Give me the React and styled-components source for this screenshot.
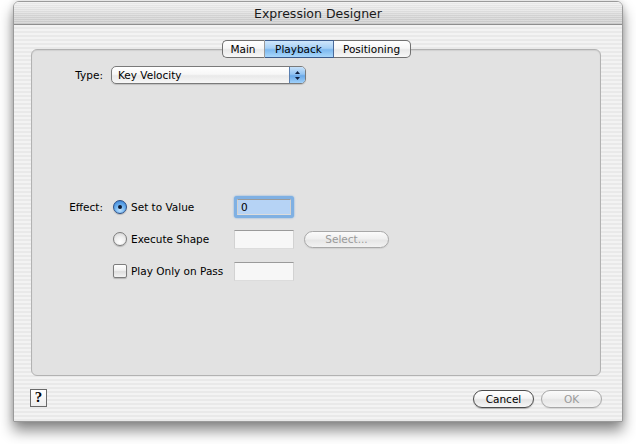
import React from 'react'
import styled, { createGlobalStyle } from 'styled-components'

const GlobalStyle = createGlobalStyle`
    html, body {
        margin: 0;
        padding: 0;
        background: #ffffff;
    }
    body {
        font-family: "DejaVu Sans", "Liberation Sans", sans-serif;
        font-size: 10.5px;
        color: #000;
    }
`

export default function App() {
    return (
        <Page>
            <GlobalStyle />
            <Window>
                <TitleBar>Expression Designer</TitleBar>
                <Body>
                    <TabRow>
                        <Tab first width={43}>Main</Tab>
                        <Tab selected width={69}>Playback</Tab>
                        <Tab last width={77}>Positioning</Tab>
                    </TabRow>
                    <TabBox>
                        <FieldRow>
                            <Label>Type:</Label>
                            <Popup>
                                <span>Key Velocity</span>
                                <PopupArrows>
                                    <svg width="7" height="11" viewBox="0 0 7 11">
                                        <path d="M3.5 1 L6 4 L1 4 Z" fill="#102040" />
                                        <path d="M3.5 10 L6 7 L1 7 Z" fill="#102040" />
                                    </svg>
                                </PopupArrows>
                            </Popup>
                        </FieldRow>

                        <EffectGrid>
                            <Label>Effect:</Label>
                            <Option>
                                <Radio checked />
                                <span>Set to Value</span>
                            </Option>
                            <FocusRing>
                                <TextField focused>0</TextField>
                            </FocusRing>
                            <div />

                            <div />
                            <Option>
                                <Radio />
                                <span>Execute Shape</span>
                            </Option>
                            <TextField />
                            <PillButton disabled wide>Select...</PillButton>

                            <div />
                            <Option>
                                <Checkbox />
                                <span>Play Only on Pass</span>
                            </Option>
                            <TextField />
                            <div />
                        </EffectGrid>
                    </TabBox>
                    <Footer>
                        <HelpButton>?</HelpButton>
                        <ButtonGroup>
                            <PillButton>Cancel</PillButton>
                            <PillButton disabled>OK</PillButton>
                        </ButtonGroup>
                    </Footer>
                </Body>
            </Window>
        </Page>
    )
}

const Page = styled.div`
    width: 636px;
    height: 444px;
    padding: 1px 0 0 13px;
    box-sizing: border-box;
    background: #ffffff;
`

const Window = styled.div`
    width: 610px;
    height: 421px;
    display: flex;
    flex-direction: column;
    border: 1px solid #9a9a9a;
    border-radius: 6px 6px 0 0;
    box-sizing: border-box;
    overflow: hidden;
    box-shadow: 0 9px 14px rgba(0, 0, 0, 0.45), 0 0 6px rgba(0, 0, 0, 0.15);
`

const TitleBar = styled.div`
    height: 22px;
    flex: 0 0 22px;
    display: flex;
    align-items: center;
    justify-content: center;
    font-size: 12.5px;
    color: #1a1a1a;
    border-bottom: 1px solid #8e8e8e;
    background:
        repeating-linear-gradient(to bottom, rgba(255,255,255,0.25) 0 1px, rgba(0,0,0,0.02) 1px 2px),
        linear-gradient(to bottom, #efefef 0%, #e2e2e2 40%, #d6d6d6 60%, #cdcdcd 100%);
`

const Body = styled.div`
    flex: 1;
    display: flex;
    flex-direction: column;
    padding: 15px 21px 0 17px;
    background: repeating-linear-gradient(to bottom, #f3f3f3 0 2px, #e9e9e9 2px 4px);
`

const TabRow = styled.div`
    display: flex;
    justify-content: center;
    margin-bottom: -9px;
    position: relative;
    z-index: 1;
`

const Tab = styled.div`
    width: ${props => props.width}px;
    height: 18px;
    display: flex;
    align-items: center;
    justify-content: center;
    font-size: 10.5px;
    color: #000;
    box-sizing: border-box;
    border-top: 1px solid ${props => props.selected ? '#3b5b8c' : '#707070'};
    border-bottom: 1px solid ${props => props.selected ? '#3b5b8c' : '#707070'};
    border-left: ${props => props.first ? '1px solid #707070' : 'none'};
    border-right: ${props => props.selected ? '1px solid #4a6a9a' : (props.last ? '1px solid #707070' : '1px solid #9a9a9a')};
    border-radius: ${props => props.first ? '5px 0 0 5px' : (props.last ? '0 5px 5px 0' : '0')};
    background: ${props => props.selected
        ? 'linear-gradient(to bottom, #cfe6fb 0%, #a6d0f6 45%, #7cb8ef 55%, #a9d7fb 100%)'
        : 'linear-gradient(to bottom, #ffffff 0%, #f6f6f6 45%, #e8e8e8 55%, #f8f8f8 100%)'};
`

const TabBox = styled.div`
    height: 327px;
    box-sizing: border-box;
    border: 1px solid #b2b2b2;
    border-radius: 6px;
    background: #e2e2e2;
    padding: 16px 0 0 30px;
    box-shadow: inset 0 1px 1px rgba(0,0,0,0.08);
`

const FieldRow = styled.div`
    display: flex;
    align-items: center;
    height: 18px;
`

const Label = styled.div`
    width: 41px;
    text-align: right;
    white-space: nowrap;
`

const Popup = styled.div`
    margin-left: 8px;
    width: 195px;
    height: 18px;
    box-sizing: border-box;
    display: flex;
    align-items: center;
    justify-content: space-between;
    padding-left: 6px;
    border: 1px solid #7a7a7a;
    border-radius: 5px;
    overflow: hidden;
    background: linear-gradient(to bottom, #ffffff 0%, #f7f7f7 45%, #e9e9e9 55%, #f7f7f7 100%);
    box-shadow: 0 1px 1px rgba(0,0,0,0.15);
`

const PopupArrows = styled.div`
    width: 15px;
    height: 100%;
    display: flex;
    align-items: center;
    justify-content: center;
    border-left: 1px solid #5a7fb0;
    background: linear-gradient(to bottom, #c6e1fa 0%, #93c4f2 45%, #6aa9e8 55%, #9fd0fa 100%);
`

const EffectGrid = styled.div`
    margin-top: 107px;
    display: grid;
    grid-template-columns: 41px 131px 60px 95px;
    grid-auto-rows: 32px;
    align-items: center;
`

const Option = styled.div`
    display: flex;
    align-items: center;
    gap: 4px;
    padding-left: 10px;
    white-space: nowrap;
`

const Radio = styled.div`
    width: 14px;
    height: 14px;
    border-radius: 50%;
    box-sizing: border-box;
    border: 1px solid ${props => props.checked ? '#2a4e86' : '#7d7d7d'};
    display: flex;
    align-items: center;
    justify-content: center;
    background: ${props => props.checked
        ? 'radial-gradient(circle at 50% 75%, #bfe2ff 0%, #6fb2ef 45%, #2f78d0 100%)'
        : 'radial-gradient(circle at 50% 75%, #ffffff 0%, #eeeeee 50%, #cfcfcf 100%)'};
    box-shadow: 0 1px 1px rgba(0,0,0,0.2);

    &::after {
        content: '';
        width: 4px;
        height: 4px;
        border-radius: 50%;
        background: #0d1a33;
        display: ${props => props.checked ? 'block' : 'none'};
    }
`

const Checkbox = styled.div`
    width: 14px;
    height: 14px;
    box-sizing: border-box;
    border: 1px solid #7d7d7d;
    border-radius: 2px;
    background: linear-gradient(to bottom, #ffffff 0%, #f0f0f0 45%, #dedede 55%, #f3f3f3 100%);
    box-shadow: 0 1px 1px rgba(0,0,0,0.2);
`

const FocusRing = styled.div`
    width: 60px;
    height: 22px;
    box-sizing: border-box;
    padding: 3px;
    border-radius: 3px;
    background: #7fb0e3;
    box-shadow: 0 0 2px #6ea4dc;
`

const TextField = styled.div`
    width: ${props => props.focused ? 54 : 60}px;
    height: ${props => props.focused ? 16 : 19}px;
    box-sizing: border-box;
    padding: 1px 3px;
    line-height: 13px;
    border-top: 1px solid #9a9a9a;
    border-left: 1px solid #d2d2d2;
    border-right: 1px solid #d2d2d2;
    border-bottom: 1px solid #dcdcdc;
    background: ${props => props.focused ? '#b6d3f5' : '#f7f7f7'};
`

const PillButton = styled.div`
    width: ${props => props.wide ? 85 : 61}px;
    margin-left: ${props => props.wide ? 10 : 0}px;
    height: ${props => props.wide ? 17 : 18}px;
    box-sizing: border-box;
    display: flex;
    align-items: center;
    justify-content: center;
    color: ${props => props.disabled ? '#9a9a9a' : '#000'};
    border: 1px solid ${props => props.disabled ? '#a8a8a8' : '#4c4c4c'};
    border-radius: 9px;
    background: ${props => props.disabled
        ? 'linear-gradient(to bottom, #fbfbfb 0%, #f0f0f0 45%, #e6e6e6 55%, #f2f2f2 100%)'
        : 'linear-gradient(to bottom, #ffffff 0%, #f5f5f5 45%, #e4e4e4 55%, #f6f6f6 100%)'};
    box-shadow: 0 1px 1px rgba(0,0,0,${props => props.disabled ? 0.08 : 0.25});
`

const Footer = styled.div`
    display: flex;
    align-items: center;
    justify-content: space-between;
    padding: 10px 0 0 0;
    margin-left: -1px;
`

const HelpButton = styled.div`
    width: 17px;
    height: 18px;
    box-sizing: border-box;
    display: flex;
    align-items: center;
    justify-content: center;
    border: 1px solid #6a6a6a;
    background: linear-gradient(to bottom, #ffffff, #ededed);
    font-family: "Liberation Serif", "Times New Roman", serif;
    font-weight: bold;
    font-size: 15px;
    margin-top: 1px;
`

const ButtonGroup = styled.div`
    display: flex;
    gap: 7px;
    margin-top: 4px;
    margin-right: -1px;
`
